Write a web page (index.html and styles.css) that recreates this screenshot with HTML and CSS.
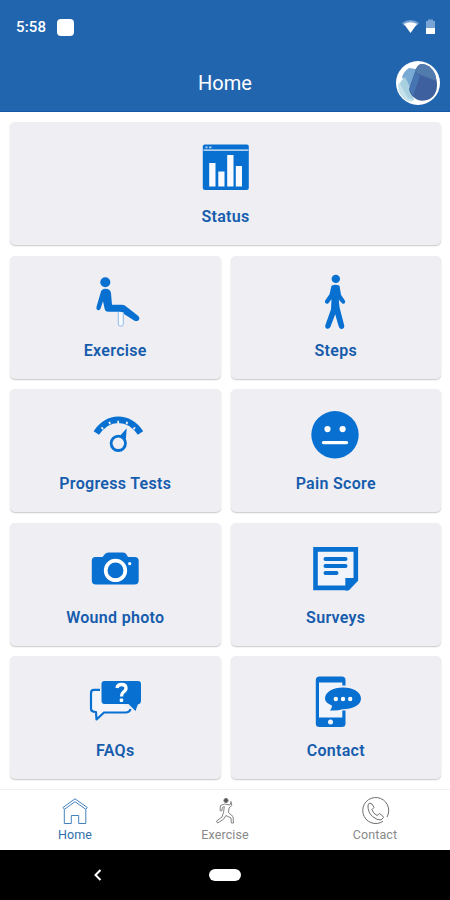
FILE: index.html
```html
<!DOCTYPE html>
<html lang="en">
<head>
<meta charset="utf-8">
<title>Home</title>
<link rel="stylesheet" href="styles.css">
</head>
<body>
<div class="app">
  <header class="header">
    <div class="status-bar">
      <span class="clock">5:58</span><span class="notice"></span>
      <svg class="signals" width="36" height="16" viewBox="401 19 36 16">
        <path d="M402 23Q410.500 17 419 23L417 25.500H404Z" fill="#78a4d6"/>
        <path d="M404 24Q410.500 20.500 417 24L410.500 33Z" fill="#fff"/>
        <path d="M426 28V21H428V19.500H433V21H435V28Z" fill="#78a4d6"/>
        <path d="M426 28H435V34H426Z" fill="#fff"/>
      </svg>
    </div>
    <div class="title-bar">
      <span></span>
      <h1>Home</h1>
      <svg class="logo" width="46" height="46" viewBox="395 59 46 46">
        <circle cx="418" cy="82" r="22" fill="#fff"/>
        <path d="M398 84Q400 80 404 79L414 99Q410 102 406 99Q398 94 398 84Z" fill="#c5e1ea"/>
        <path d="M402 76Q404 70 409 67L416 68L421 75L411 91Z" fill="#78aad3"/>
        <path d="M411 88L405 76Q401 79 400 83L408 97L414 99Z" fill="#a9d0e0"/>
        <path d="M415 71Q417 63 422 63Q430 63 435 73Q438 82 436.500 89Q434 97 427 99Q420 101 416 98Q410 94 409 88Z" fill="#3e609e"/>
        <path d="M415 71Q417 63 422 63Q430 63 435 73L436.500 80L418 73Z" fill="#527bad"/>
        <path d="M409.500 88L415 71L420 75L413 95Z" fill="#4775b2"/>
      </svg>
    </div>
  </header>

  <main class="grid">
    <a class="card wide">
      <svg class="icon" viewBox="195.500 137.400 60 60">
        <rect x="202.300" y="145" width="46" height="45.500" rx="2" fill="#0870d1"/>
        <path d="M203 150.500H248" stroke="#eeeef3" stroke-width="1.300"/>
        <path d="M205 147.800H207M208.500 147.800H211" stroke="#b3d3f2" stroke-width="1.700"/>
        <path d="M208.700 163.500H215V187H208.700ZM217.800 172H224V187H217.800ZM226.700 155.500H233V187H226.700ZM235.300 166.500H241.500V187H235.300Z" fill="#f8faff"/>
      </svg>
      <span>Status</span>
    </a>
    <a class="card">
      <svg class="icon" viewBox="85.500 270.800 60 60">
        <circle cx="105.800" cy="282" r="5" fill="#0870d1"/>
        <path d="M101 293Q101.500 288.500 106 288.500Q111 288.500 111.500 293L112.500 304.500H122Q124.500 304.500 126 305.700L138.500 315.500Q141 318 139 320Q137.500 321.500 135 320.500L121 311.500H109Q105.500 311.500 105 308L103.500 301L101 308.500Q100 310.500 98 309.800Q96.500 309 97 306.500Z" fill="#0870d1"/>
        <path d="M118.800 312V324Q118.800 326 121.300 326Q123.800 326 123.800 324V312" fill="#f7faff" stroke="#8dbbe8"/>
      </svg>
      <span>Exercise</span>
    </a>
    <a class="card">
      <svg class="icon" viewBox="306 270.800 60 60">
        <circle cx="335.800" cy="278.700" r="4.200" fill="#0870d1"/>
        <path d="M331.500 285.500Q335.500 283.500 339.500 285.500L341 294.500L345 300.500Q345.800 304 342.500 303.500L338.800 299.500L339.500 307L344.300 325.500Q344.300 329 341 328.800Q339 328 338.500 325.500L335.200 314L330.500 326.500Q329 329.500 326 328Q324.500 326.500 325.500 324.500L331 309L331.500 299L328 303.500Q324.500 304 325 300.500L329.500 294Z" fill="#0870d1"/>
      </svg>
      <span>Steps</span>
    </a>
    <a class="card">
      <svg class="icon" viewBox="85.500 404.200 60 60">
        <path d="M96.800 433.200Q106 420 118.700 420Q132 420 141 433.200" fill="none" stroke="#0870d1" stroke-width="6.500"/>
        <path d="M103.500 429.500L102 427.500M110.500 424.500L109.800 422M118.700 423.500V421M127 424.500L127.700 422M134 429.500L135.500 427.500" stroke="#eeeef3" stroke-width="1.800"/>
        <path d="M116 437L121 435.500L127.200 428.500L126.500 438L125 443Z" fill="#0870d1"/>
        <circle cx="118.800" cy="443.500" r="7.200" fill="#eeeef3" stroke="#0870d1" stroke-width="2.800"/>
      </svg>
      <span>Progress Tests</span>
    </a>
    <a class="card">
      <svg class="icon" viewBox="306 404.200 60 60">
        <circle cx="335" cy="435" r="23.700" fill="#0870d1"/>
        <circle cx="327.500" cy="429.300" r="3.100" fill="#fff"/><circle cx="342.600" cy="429.300" r="3.100" fill="#fff"/>
        <path d="M323.500 442.800H346.500" stroke="#fff" stroke-width="3.300" stroke-linecap="round"/>
      </svg>
      <span>Pain Score</span>
    </a>
    <a class="card">
      <svg class="icon" viewBox="85.500 537.600 60 60">
        <path d="M96 556.500H103L105.500 553.500Q106.500 552 109 552H123.500Q126 552 127 554L128.500 556.500H135Q139.200 556.500 139.200 560.500V580Q139.200 584 135 584H96.500Q92.300 584 92.300 580V560.500Q92.300 556.500 96 556.500Z" fill="#0870d1"/>
        <circle cx="116" cy="570" r="9.800" fill="none" stroke="#fff" stroke-width="3.700"/>
        <circle cx="130.200" cy="563.300" r="1.600" fill="#fff"/>
      </svg>
      <span>Wound photo</span>
    </a>
    <a class="card">
      <svg class="icon" viewBox="306 537.600 60 60">
        <path d="M315.500 549H355.800V579.500L348 587.500H315.500Z" fill="#f1f4fa" stroke="#0870d1" stroke-width="4.600"/>
        <path d="M345.300 590V577.500H358L348 590Z" fill="#0870d1"/>
        <path d="M325.500 558.500H345.500M325.500 565.500H345.500M325.500 572.700H336.500" stroke="#0870d1" stroke-width="4" stroke-linecap="round"/>
      </svg>
      <span>Surveys</span>
    </a>
    <a class="card">
      <svg class="icon" viewBox="85.500 671 60 60">
        <path d="M100.500 689.800H94.500Q91.500 689.800 91.500 693V708.500Q91.500 712 96.500 712L97 719.500L104.500 712.500H126Q130 712.500 131 709" fill="#f3f5fb" stroke="#0870d1" stroke-width="2.200" stroke-linejoin="round"/>
        <path d="M105 681H138.500Q141.500 681 141.500 684V700.500Q141.500 704 138.300 704.500L136 711L129 704H105Q102 704 102 700.500V684Q102 681 105 681Z" fill="#0870d1"/>
        <path d="M117.500 688Q118 684.500 122 684.500Q126.500 684.500 126.500 688Q126.500 690.500 124 692Q122 693.500 122 696.500" fill="none" stroke="#fff" stroke-width="3.300"/>
        <rect x="120.200" y="698.500" width="3.500" height="3.500" rx="1" fill="#fff"/>
      </svg>
      <span>FAQs</span>
    </a>
    <a class="card">
      <svg class="icon" viewBox="306 671 60 60">
        <path d="M319.500 676.500H341.800Q345.500 676.500 345.500 680V723.500Q345.500 727 341.800 727H319.500Q315.800 727 315.800 723.500V680Q315.800 676.500 319.500 676.500Z" fill="#0870d1"/>
        <path d="M319 682.500H342.300V717.500H319Z" fill="#f1f4fa"/>
        <circle cx="330.500" cy="722" r="2.500" fill="#f1f4fa"/>
        <path d="M340 685.500H347V710.500H340Z" fill="#eeeef3"/>
        <path d="M343 687.500C353 687.500 361 692 361 698.500C361 705 353 709.300 342.500 709.300Q338 710.800 330 710.500Q332 708.500 332 705.500C327.500 703.500 325 701.500 325 698.500C325 692 333 687.500 343 687.500Z" fill="#0870d1"/>
        <circle cx="335.800" cy="699" r="2.200" fill="#fff"/><circle cx="343" cy="699" r="2.200" fill="#fff"/><circle cx="350.200" cy="699" r="2.200" fill="#fff"/>
      </svg>
      <span>Contact</span>
    </a>
  </main>

  <nav class="tabs">
    <a class="tab active">
      <svg class="tab-icon" viewBox="60.500 797 30 28" fill="none" stroke="#4582bd" stroke-width="1">
        <path d="M63.500 807.500L75.500 798.800L87.800 807.500L86.300 809.300L75.500 801.700L65 809.300ZM64.800 809.300V823.500H71.800V815.500H79.200V823.500H86.300V809.300"/>
      </svg>
      <span>Home</span>
    </a>
    <a class="tab">
      <svg class="tab-icon" viewBox="210.500 797 30 28" fill="none" stroke="#858585" stroke-width="1">
        <circle cx="226.500" cy="800.500" r="2.100" fill="#555" stroke="#777"/>
        <path d="M225 804L221 805.500L220.500 810.500L222 811L223 807.500L224.800 806.500L224 812.500L222.500 817L217 821L218 823L223.800 819.500L226.500 815.500L231.500 818L231.800 823H234L233.500 816.500L229 812.500L229.500 808L232.300 805.500L231.500 801.500L230.500 805L225 804"/>
      </svg>
      <span>Exercise</span>
    </a>
    <a class="tab">
      <svg class="tab-icon" viewBox="360.500 797 30 28" fill="none" stroke="#6e6e6e" stroke-width="1">
        <path d="M387.500 817A13 13 0 1 0 383.500 821.300"/>
        <path d="M370 803L368.500 805Q368 812 373 816.500Q378 820.500 381.500 820L384 817.500Q384 816 380 813.500L377.500 815.500Q373 813 372.500 809.500L374.500 807.500Q373 803 370 803Z"/>
      </svg>
      <span>Contact</span>
    </a>
  </nav>

  <footer class="system-nav">
    <svg width="10" height="14" viewBox="0 0 10 14"><path d="M7.500 2L2.500 7L7.500 12" fill="none" stroke="#fff" stroke-width="2"/></svg>
    <span class="pill"></span>
    <span></span>
  </footer>
</div>
</body>
</html>
```

FILE: styles.css
```css
* { box-sizing: border-box; }
body { margin: 0; background: #fff; font-family: Roboto, "Liberation Sans", sans-serif; }
.app { width: 450px; height: 900px; display: flex; flex-direction: column; overflow: hidden; }
.header { height: 112px; background: #2265af; color: #fff; border-bottom: 1px solid #1459a8; flex: none; }
.status-bar { height: 54px; display: flex; align-items: center; padding: 0 13px 0 16px; }
.clock { font-size: 15px; font-weight: 500; width: 41px; letter-spacing: .15px; }
.notice { width: 17px; height: 17px; border-radius: 4px; background: #fff; }
.signals { margin-left: auto; }
.title-bar { height: 57px; display: grid; grid-template-columns: 1fr auto 1fr; align-items: center; padding: 0 9px; }
.title-bar h1 { margin: 0; font-size: 20px; line-height: 24px; font-weight: 400; letter-spacing: 0; }
.logo { justify-self: end; }
.grid { flex: none; height: 677px; padding: 10.400px 9px 0 10px; display: grid; grid-template-columns: 1fr 1fr; grid-auto-rows: 123px; gap: 10.400px 10px; align-content: start; }
.card { background: #eeeef3; border-radius: 5px; box-shadow: 0 1px 1.500px rgba(0, 0, 0, .22); display: flex; flex-direction: column; align-items: center; padding-top: 15px; color: #165cad; font-size: 16px; line-height: 22px; font-weight: 600; letter-spacing: .3px; }
.card span { margin-top: 9px; }
.wide { grid-column: 1 / -1; }
.icon { width: 60px; height: 60px; flex: none; }
.tabs { height: 61px; flex: none; border-top: 1px solid #f0f0f0; display: grid; grid-template-columns: repeat(3, 1fr); background: #fff; }
.tab { display: flex; flex-direction: column; align-items: center; padding-top: 7px; color: #898989; font-size: 12.500px; line-height: 19px; letter-spacing: .1px; }
.tab.active { color: #316fab; }
.tab-icon { width: 30px; height: 28px; }
.system-nav { height: 50px; background: #000; display: grid; grid-template-columns: 1fr 32px 1fr; align-items: center; }
.system-nav svg { margin-left: 93px; }
.pill { height: 12px; border-radius: 6px; background: #fff; }
```
